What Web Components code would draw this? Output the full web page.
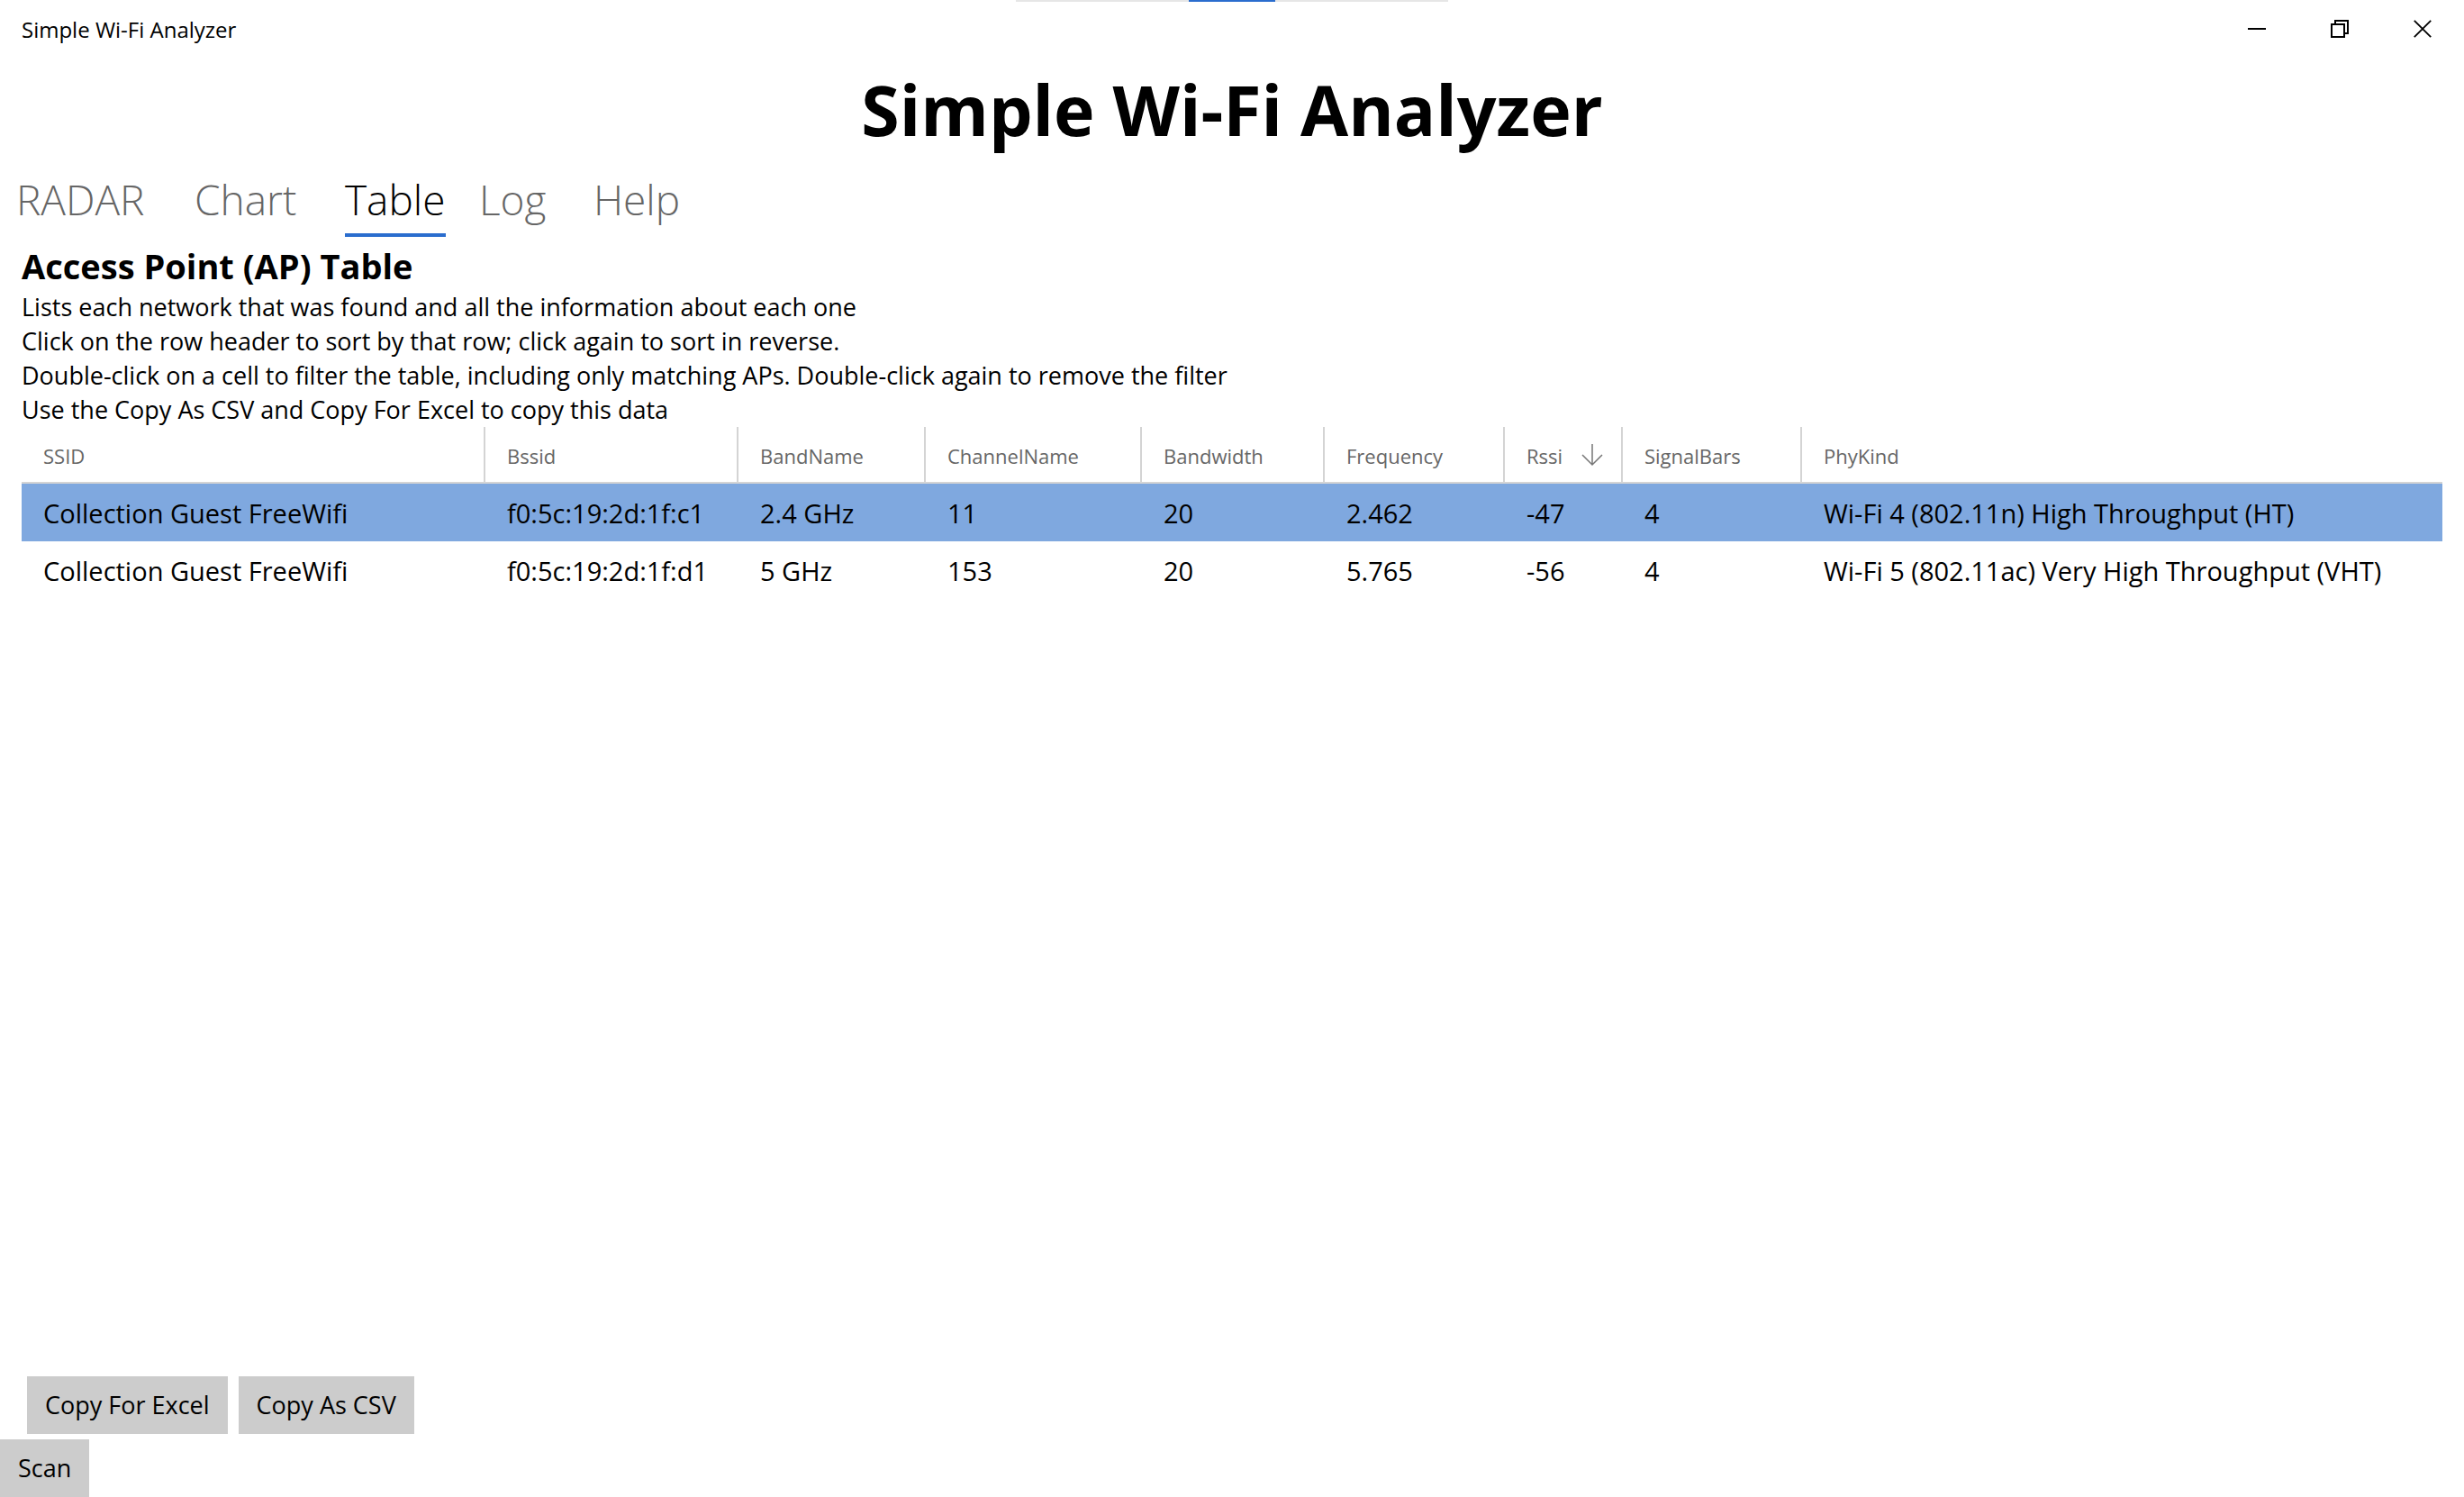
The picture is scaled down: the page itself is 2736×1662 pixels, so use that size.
<!DOCTYPE html>
<html lang="en">
<head>
<meta charset="utf-8">
<title>Simple Wi-Fi Analyzer</title>
<style>
  html, body { margin: 0; height: 100%; }
  body { background: #fff; color: #000; font: 27px/38px "Open Sans", "Noto Sans", sans-serif; }
</style>
</head>
<body>
<wifi-app></wifi-app>

<template id="t-app">
  <style>
    :host { display: flex; flex-direction: column; min-height: 100vh; }
    h1 { margin: 0; text-align: center; font-size: 77px; line-height: 116px; font-weight: 700; }
    main { flex: 1; display: flex; flex-direction: column; padding: 0 24px; }
    h2 { margin: 0; font-size: 38px; line-height: 54px; font-weight: 700; }
    p { margin: 0; }
    .actions { display: flex; gap: 12px; margin: auto 6px 6px; }
    footer { display: flex; }
  </style>
  <title-bar>Simple Wi-Fi Analyzer</title-bar>
  <h1>Simple Wi-Fi Analyzer</h1>
  <tab-strip></tab-strip>
  <main>
    <div class="intro">
      <h2>Access Point (AP) Table</h2>
      <p>Lists each network that was found and all the information about each one</p>
      <p>Click on the row header to sort by that row; click again to sort in reverse.</p>
      <p>Double-click on a cell to filter the table, including only matching APs. Double-click again to remove the filter</p>
      <p>Use the Copy As CSV and Copy For Excel to copy this data</p>
    </div>
    <ap-table></ap-table>
    <div class="actions">
      <app-button>Copy For Excel</app-button>
      <app-button>Copy As CSV</app-button>
    </div>
  </main>
  <footer><app-button>Scan</app-button></footer>
</template>

<template id="t-title">
  <style>
    :host { display: flex; position: relative; height: 64px; align-items: center; font-size: 24px; line-height: 32px; }
    .name { flex: 1; padding: 2px 24px 0; }
    .controls { display: flex; }
    button { width: 92px; height: 64px; padding: 0; border: 0; background: none; display: grid; place-items: center; }
    svg { display: block; fill: none; stroke: #000; stroke-width: 2; }
    .handle { position: absolute; top: 0; left: 50%; width: 480px; height: 2px; margin-left: -240px; background: #e6e6e6; display: flex; justify-content: center; }
    .handle i { width: 96px; background: #2a6dce; }
  </style>
  <span class="name"><slot></slot></span>
  <div class="controls">
    <button aria-label="Minimize"><svg width="20" height="20"><path d="M0 10H20"/></svg></button>
    <button aria-label="Restore"><svg width="20" height="20"><path d="M1 5H15V19H1ZM5 5V1H19V15H15"/></svg></button>
    <button aria-label="Close"><svg width="20" height="20"><path stroke-width="1.8" d="M.8.8L19.2 19.2M19.2.8L.8 19.2"/></svg></button>
  </div>
  <div class="handle"><i></i></div>
</template>

<template id="t-tabs">
  <style>
    :host { display: block; padding: 0 18px; }
    nav { display: grid; grid-template-columns: 198px 167px 149px 127px auto; justify-content: start; height: 88px; }
    a { justify-self: start; align-self: start; height: 83px; padding-top: 9px; box-sizing: border-box; color: #666; text-decoration: none; font-size: 46px; line-height: 64px; font-weight: 300; }
    a[aria-current] { color: #000; border-bottom: 4px solid #2a6dce; }
  </style>
  <nav>
    <a href="#radar">RADAR</a>
    <a href="#chart">Chart</a>
    <a href="#table" aria-current="page">Table</a>
    <a href="#log">Log</a>
    <a href="#help">Help</a>
  </nav>
</template>

<template id="t-button">
  <style>
    :host { display: block; }
    button { display: block; height: 64px; padding: 0 20px; border: 0; background: #ccc; color: #000; font: inherit; }
  </style>
  <button><slot></slot></button>
</template>

<template id="t-table">
  <style>
    :host { display: block; }
    table { width: 100%; table-layout: fixed; border-collapse: separate; border-spacing: 0; }
    th, td { box-sizing: border-box; padding: 2px 0 0 24px; text-align: left; white-space: nowrap; }
    th { height: 63px; padding-top: 3px; border-right: 2px solid #d4d4d4; border-bottom: 2px solid #d4d4d4; color: #666; font-size: 22px; line-height: 32px; font-weight: 400; }
    th:last-child { border-right: 0; }
    th div { display: flex; align-items: center; justify-content: space-between; padding-right: 20px; }
    td { height: 64px; font-size: 29px; }
    tr.selected td { background: #7fa8df; }
    svg { display: block; fill: none; stroke: #777; stroke-width: 1.5; }
  </style>
  <table>
    <colgroup></colgroup>
    <thead><tr></tr></thead>
    <tbody></tbody>
  </table>
</template>

<script>
  class Base extends HTMLElement {
    constructor(id) {
      super();
      this.attachShadow({ mode: 'open' }).append(document.getElementById(id).content.cloneNode(true));
    }
  }
  customElements.define('app-button', class extends Base { constructor() { super('t-button'); } });
  customElements.define('title-bar', class extends Base { constructor() { super('t-title'); } });
  customElements.define('tab-strip', class extends Base { constructor() { super('t-tabs'); } });

  const columns = [
    ['SSID', 515], ['Bssid', 281], ['BandName', 208], ['ChannelName', 240], ['Bandwidth', 203],
    ['Frequency', 200], ['Rssi', 131], ['SignalBars', 199], ['PhyKind', 0]
  ];
  const rows = [
    ['Collection Guest FreeWifi', 'f0:5c:19:2d:1f:c1', '2.4 GHz', '11', '20', '2.462', '-47', '4', 'Wi-Fi 4 (802.11n) High Throughput (HT)'],
    ['Collection Guest FreeWifi', 'f0:5c:19:2d:1f:d1', '5 GHz', '153', '20', '5.765', '-56', '4', 'Wi-Fi 5 (802.11ac) Very High Throughput (VHT)']
  ];
  const arrow = '<svg width="24" height="26" aria-hidden="true"><path d="M12 0V23M1 12L12 23L23 12"/></svg>';

  customElements.define('ap-table', class extends Base {
    constructor() {
      super('t-table');
      const find = s => this.shadowRoot.querySelector(s);
      find('colgroup').innerHTML = columns.map(([, w]) => w ? `<col style="width:${w}px">` : '<col>').join('');
      find('thead tr').innerHTML = columns.map(([name]) =>
        name === 'Rssi' ? `<th scope="col" aria-sort="descending"><div>${name}${arrow}</div></th>` : `<th scope="col">${name}</th>`).join('');
      find('tbody').innerHTML = rows.map((r, i) =>
        `<tr${i ? '' : ' class="selected"'}>${r.map(c => `<td>${c}</td>`).join('')}</tr>`).join('');
    }
  });
  customElements.define('wifi-app', class extends Base { constructor() { super('t-app'); } });
</script>
</body>
</html>
